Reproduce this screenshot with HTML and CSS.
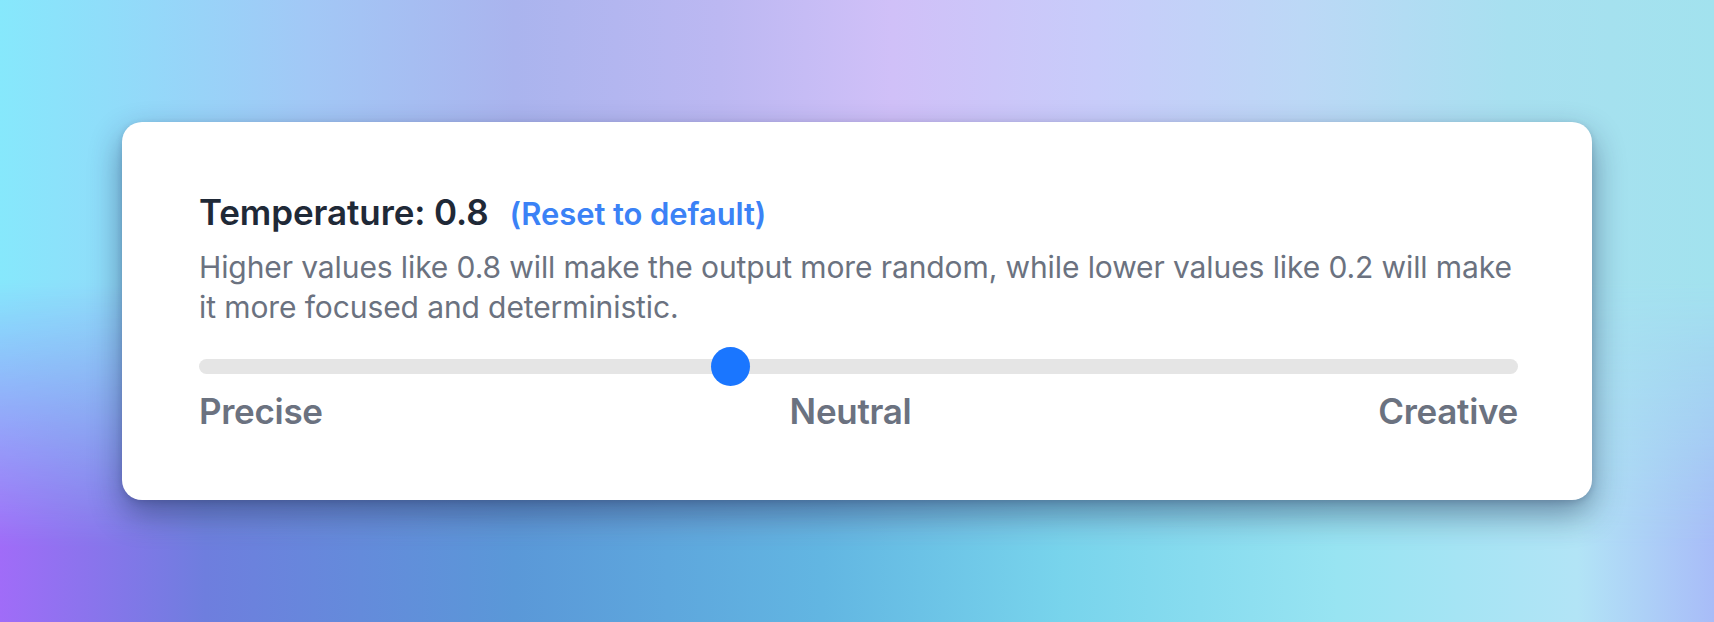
FILE: index.html
```html
<!DOCTYPE html>
<html lang="en">
<head>
    <meta charset="UTF-8">
    <title>Temperature Setting</title>
    <meta name="viewport" content="width=device-width">
    <link rel="stylesheet" href="styles.css">
</head>
<body>
    <main class="card">
        <div class="setting-head">
            <h2 class="setting-title">Temperature: 0.8</h2>
            <button class="reset-link" type="button">(Reset to default)</button>
        </div>
        <p class="setting-desc">Higher values like 0.8 will make the output more random, while lower values like 0.2 will make it more focused and deterministic.</p>
        <input class="slider" type="range" min="0" max="2" step="0.1" value="0.8">
        <div class="slider-labels">
            <span>Precise</span>
            <span>Neutral</span>
            <span>Creative</span>
        </div>
    </main>
</body>
</html>
```

FILE: styles.css
```css
*{
    padding: 0;
    margin: 0;
    box-sizing: border-box;
}
html, body{
    height: 100%;
}
body{
    position: relative;
    isolation: isolate;
    font-family: Inter, "Noto Sans", "Liberation Sans", sans-serif;
    padding: 122px 122px 0 122px;
    overflow: hidden;
    background:
        linear-gradient(90deg, #a06cf8 0%, #6e7ede 12%, #5a98d8 30%, #62b6e2 48%, #78d4ec 62%, #98e4f2 78%, #b2e4f6 92%, #a8bcf8 100%);
}
/* soft top half of the backdrop, faded into the bottom colours */
body::before{
    content: "";
    position: absolute;
    inset: 0;
    z-index: -1;
    background: linear-gradient(90deg, #86e8fc 0%, #a2c8f6 18%, #aab4ee 30%, #bcb8f2 42%, #d0c0f8 52%, #c8ccfa 64%, #bcd8f6 76%, #a8e0f0 88%, #a2e2ee 100%);
    -webkit-mask-image: linear-gradient(to bottom, #000 0%, #000 45%, transparent 88%);
    mask-image: linear-gradient(to bottom, #000 0%, #000 45%, transparent 88%);
}
.card{
    width: 1470px;
    height: 378px;
    background: #fff;
    border-radius: 20px;
    padding: 70px 74px 0 77px;
    box-shadow: 0 14px 32px rgba(20, 30, 70, 0.45), 0 2px 6px rgba(20, 30, 70, 0.15);
}
.setting-head{
    display: flex;
    align-items: baseline;
    gap: 21px;
}
.setting-title{
    font-size: 35px;
    font-weight: 600;
    line-height: 40px;
    color: #1f2937;
    letter-spacing: -0.1px;
}
.reset-link{
    font-family: inherit;
    font-size: 31px;
    font-weight: 600;
    line-height: 40px;
    color: #3b82f6;
    background: none;
    border: none;
    cursor: pointer;
    letter-spacing: -0.1px;
}
.setting-desc{
    margin-top: 13px;
    font-size: 30px;
    line-height: 40px;
    color: #6b7280;
    letter-spacing: -0.1px;
}
.slider{
    -webkit-appearance: none;
    appearance: none;
    display: block;
    width: 100%;
    height: 15px;
    margin-top: 32px;
    background: #e5e5e5;
    border-radius: 8px;
    outline: none;
}
.slider::-webkit-slider-thumb{
    -webkit-appearance: none;
    appearance: none;
    width: 39px;
    height: 39px;
    border-radius: 50%;
    background: #1a76ff;
    border: none;
    cursor: pointer;
}
.slider-labels{
    display: flex;
    justify-content: space-between;
    margin-top: 17px;
    font-size: 35px;
    font-weight: 600;
    line-height: 40px;
    color: #6b7280;
    letter-spacing: -0.3px;
}
```
